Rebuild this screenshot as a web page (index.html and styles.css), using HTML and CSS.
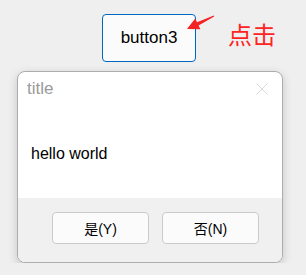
FILE: index.html
```html
<!DOCTYPE html>
<html lang="zh">
<head>
  <meta charset="UTF-8">
  <meta name="viewport" content="width=device-width, initial-scale=1.0">
  <title>Dialog</title>
  <link rel="stylesheet" href="styles.css">
</head>
<body>
  <div class="top">
    <button class="btn3" type="button">button3</button>
    <span class="click">点击</span>
    <svg class="arrow" width="32" height="18" viewBox="0 0 32 18">
      <polygon points="28.8,1.55 29.2,2.45 13.6,11.4 15.4,15.2 2,15 10.2,4.4 12,8.2" fill="#f32424"/>
    </svg>
  </div>

  <div class="dialog">
    <div class="dialog-head">
      <span class="dialog-title">title</span>
      <svg class="close" width="12" height="12" viewBox="0 0 12 12">
        <path d="M0.5 0.5 L11.5 11.5 M11.5 0.5 L0.5 11.5" stroke="#d9d9d9" stroke-width="1" fill="none"/>
      </svg>
    </div>
    <div class="dialog-body">hello world</div>
    <div class="dialog-foot">
      <button class="foot-btn" type="button">是(Y)</button>
      <button class="foot-btn" type="button">否(N)</button>
    </div>
  </div>
</body>
</html>
```

FILE: styles.css
```css
body {
  margin: 0;
  background-color: #efefef;
  font-family: "Liberation Sans", "Noto Sans CJK SC", sans-serif;
  color: #000;
}

.top {
  position: relative;
  display: flex;
  align-items: flex-start;
  padding: 14px 0 0 102px;
}

.btn3 {
  width: 94px;
  height: 48px;
  box-sizing: border-box;
  border: 1px solid #0067c0;
  border-radius: 4px;
  background-color: #fbfbfb;
  font-family: "Liberation Sans", sans-serif;
  font-size: 17px;
  color: #000;
  padding: 0;
}

.click {
  margin: 8px 0 0 32px;
  font-family: "Noto Sans CJK SC", sans-serif;
  font-size: 24px;
  line-height: 24px;
  color: #ff2424;
}

.arrow {
  position: absolute;
  left: 185px;
  top: 14px;
}

.dialog {
  margin: 9px 0 0 17px;
  width: 266px;
  height: 192px;
  box-sizing: border-box;
  border: 1px solid #adadad;
  border-radius: 8px;
  background: #fff;
  overflow: hidden;
  display: flex;
  flex-direction: column;
  box-shadow: 0 3px 10px rgba(0, 0, 0, 0.18);
}

.dialog-head {
  display: flex;
  justify-content: space-between;
  align-items: center;
  padding: 5px 14px 0 9px;
  height: 24px;
}

.dialog-title {
  font-size: 17px;
  line-height: 24px;
  color: #9a9a9a;
}

.dialog-body {
  flex: 1;
  padding: 43px 0 0 13px;
  font-size: 16px;
  line-height: 20px;
}

.dialog-foot {
  height: 64px;
  box-sizing: border-box;
  padding: 14px 23px 0 0;
  background-color: #f0f0f0;
  display: flex;
  justify-content: flex-end;
  align-items: flex-start;
  gap: 13px;
}

.foot-btn {
  width: 97px;
  height: 32px;
  box-sizing: border-box;
  border: 1px solid #cbcbcb;
  border-radius: 4px;
  background-color: #fbfbfb;
  font-family: "Liberation Sans", "Noto Sans CJK SC", sans-serif;
  font-size: 14px;
  color: #000;
  padding: 0;
}
```
